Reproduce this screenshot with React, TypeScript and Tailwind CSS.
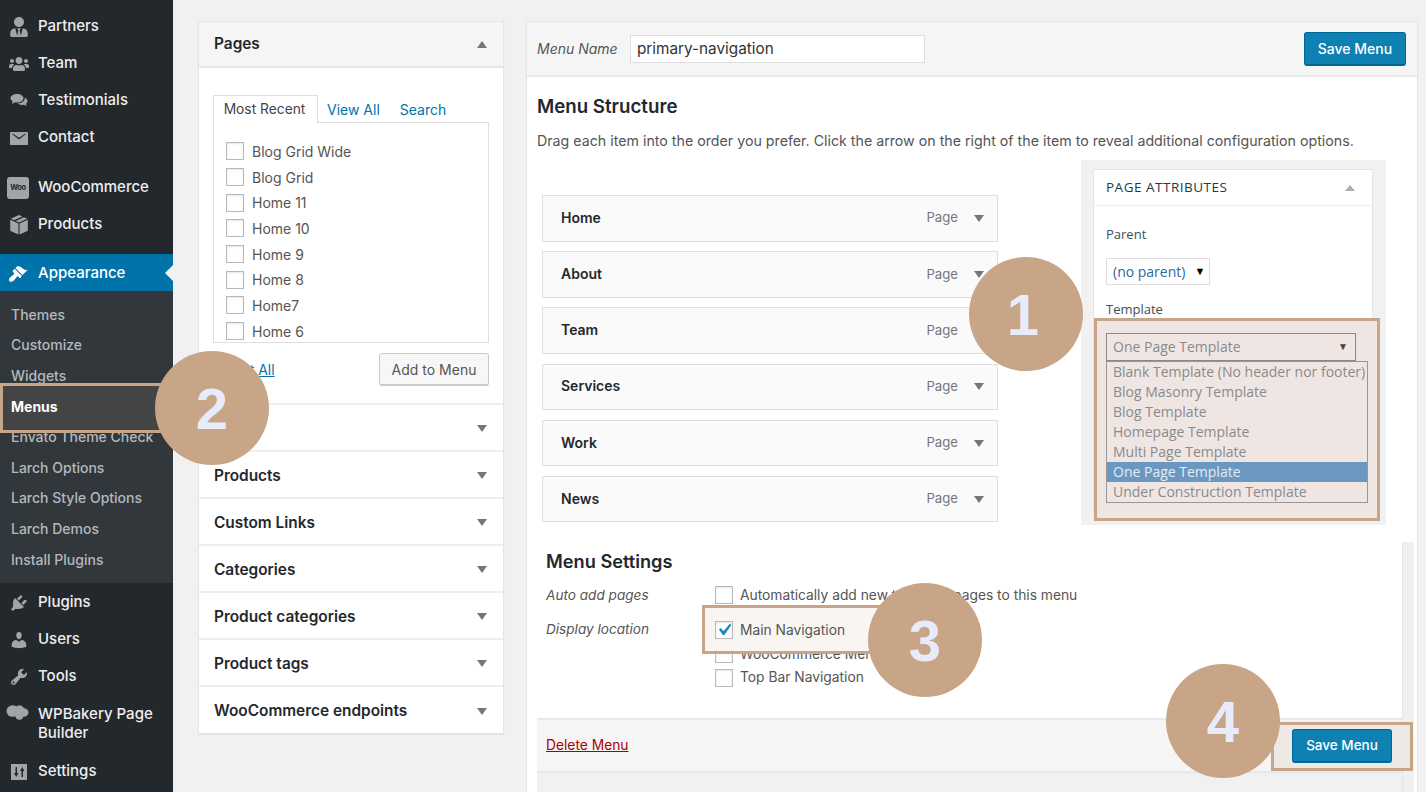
import { FaUserTie, FaUsers } from "react-icons/fa"

const iconClass = "w-5 h-5 fill-current"

const Dash = ({ d }: { d: string }) => (
  <svg viewBox="0 0 20 20" className={iconClass}>
    <path d={d} />
  </svg>
)

const Chat = () => (
  <svg viewBox="0 0 20 20" className={iconClass}>
    <path d="M8 3c3.6 0 6.5 1.900 6.500 4.300S11.600 11.500 8 11.500c-.7 0-1.300-.1-1.900-.2L3 13l.6-2.900C2.300 9.300 1.500 8.400 1.500 7.300 1.500 4.900 4.400 3 8 3z" />
    <path d="M15.800 6.800c1.600.7 2.700 1.900 2.700 3.300 0 1-.6 2-1.500 2.700l.4 2.200-2.500-1.300c-.6.100-1.200.2-1.800.2-1.900 0-3.500-.6-4.500-1.600 3.800.1 6.900-1.900 7.200-4.900z" />
  </svg>
)

const Mail = () => (
  <svg viewBox="0 0 20 20" className={iconClass}>
    <path d="M2 4h16c.6 0 1 .4 1 1v11c0 .6-.4 1-1 1H2c-.6 0-1-.4-1-1V5c0-.6.4-1 1-1zm1 2l7 5.500L17 6l-1-.2-6 4-6-4z" fillRule="evenodd" />
  </svg>
)

const Woo = () => (
  <div className="w-[22px] h-[22px] rounded-[3px] bg-[#a0a5aa] flex items-center justify-center text-[7.500px] font-bold tracking-tighter text-[#23282d] -ml-[2px]">
    Woo
  </div>
)

const Box = () => (
  <svg viewBox="0 0 20 20" className="w-[22px] h-[22px] fill-current -ml-[1px]">
    <path d="M10 1l3 1.300-7.500 3.300-3-1.300zM14.500 3l3 1.400L10 7.700 7 6.400zM2 5.300l7.500 3.300v10L2 15.300zM18 5.300v10l-7.500 3.300v-10z" />
  </svg>
)

const Cloud = () => (
  <svg viewBox="0 0 24 20" className="w-[23px] h-5 fill-current -ml-[3px]">
    <ellipse cx="7" cy="8" rx="6.500" ry="6" />
    <ellipse cx="14" cy="7.500" rx="5.500" ry="5.500" />
    <ellipse cx="18.500" cy="9.500" rx="5" ry="4.500" />
    <ellipse cx="14" cy="13.500" rx="4" ry="3.500" />
  </svg>
)

const Sliders = () => (
  <svg viewBox="0 0 20 20" className={iconClass}>
    <path
      fillRule="evenodd"
      d="M2 2h16v16H2zM6.500 5v6H5l2.200 4 2.300-4H8V5zM13.200 5L11 9h1.500v6H14V9h1.500z"
    />
  </svg>
)

const topItems = [
  { label: "Partners", icon: <FaUserTie className="w-5 h-5" /> },
  { label: "Team", icon: <FaUsers className="w-5 h-5" /> },
  { label: "Testimonials", icon: <Chat /> },
  { label: "Contact", icon: <Mail /> },
]

const shopItems = [
  { label: "WooCommerce", icon: <Woo /> },
  { label: "Products", icon: <Box /> },
]

const subItems = [
  "Themes",
  "Customize",
  "Widgets",
  "Menus",
  "Envato Theme Check",
  "Larch Options",
  "Larch Style Options",
  "Larch Demos",
  "Install Plugins",
]

const lowerItems = [
  {
    label: "Plugins",
    icon: (
      <Dash d="M13.110 4.360L9.870 7.600 8 5.730l3.240-3.240c.35-.34 1.050-.2 1.560.32.52.51.66 1.210.31 1.550zm-8 1.770l.91-1.120 9.010 9.010-1.190.84c-.71.71-2.630 1.160-3.820 1.160H6.140L4.900 17.260c-.59.59-1.540.59-2.120 0-.59-.58-.59-1.530 0-2.120l1.240-1.240v-3.880c0-1.130.4-3.190 1.090-3.890zm7.260 3.970l3.240-3.240c.34-.35 1.040-.21 1.550.31.52.51.66 1.210.31 1.550l-3.240 3.250z" />
    ),
  },
  {
    label: "Users",
    icon: (
      <Dash d="M10 9.250c-2.270 0-2.730-3.440-2.730-3.440C7 4.020 7.820 2 9.970 2c2.160 0 2.980 2.020 2.710 3.810 0 0-.41 3.440-2.680 3.440zm0 2.570L12.720 10c2.390 0 4.520 2.330 4.520 4.530v2.490s-3.650 1.130-7.240 1.130c-3.650 0-7.240-1.130-7.240-1.130v-2.490c0-2.250 1.940-4.480 4.470-4.480z" />
    ),
  },
  {
    label: "Tools",
    icon: (
      <Dash d="M16.680 9.770c-1.340 1.340-3.300 1.670-4.950.99l-5.410 6.520c-.99.99-2.590.99-3.580 0s-.99-2.590 0-3.570l6.520-5.420c-.68-1.650-.35-3.610.99-4.950 1.280-1.280 3.120-1.620 4.720-1.060l-2.890 2.890 2.820 2.820 2.860-2.870c.53 1.580.18 3.390-1.080 4.650zM3.810 16.210c.4.39 1.040.39 1.430 0 .4-.4.4-1.040 0-1.430-.39-.4-1.030-.4-1.430 0-.39.39-.39 1.030 0 1.430z" />
    ),
  },
]

const pagesList = [
  "Blog Grid Wide",
  "Blog Grid",
  "Home 11",
  "Home 10",
  "Home 9",
  "Home 8",
  "Home7",
  "Home 6",
]

const accordions = [
  "Posts",
  "Products",
  "Custom Links",
  "Categories",
  "Product categories",
  "Product tags",
  "WooCommerce endpoints",
]

const menuItems = ["Home", "About", "Team", "Services", "Work", "News"]

const templates = [
  "Blank Template (No header nor footer)",
  "Blog Masonry Template",
  "Blog Template",
  "Homepage Template",
  "Multi Page Template",
  "One Page Template",
  "Under Construction Template",
]

function SideRow({ label, icon }: { label: string; icon: React.ReactNode }) {
  return (
    <div className="h-[37px] pt-[2px] flex items-center text-[#eeeeee] font-medium text-[15px]">
      <div className="w-[38px] pl-[9px] shrink-0 text-[#a0a5aa]">{icon}</div>
      {label}
    </div>
  )
}

function Sidebar() {
  return (
    <aside className="w-[173px] h-[792px] shrink-0 bg-[#23282d] pt-[7px] overflow-hidden">
      {topItems.map((it) => (
        <SideRow key={it.label} {...it} />
      ))}
      <div className="h-[13px]" />
      {shopItems.map((it) => (
        <SideRow key={it.label} {...it} />
      ))}
      <div className="h-3" />
      <div className="relative h-[37px] pt-[2px] flex items-center bg-[#0073aa] text-white font-medium text-[15px]">
        <div className="w-[38px] pl-[8px] shrink-0">
          <Dash d="M14.480 11.060L7.410 3.990l1.500-1.500c.5-.56 2.300-.47 3.510.32 1.210.8 1.430 1.280 2.910 2.100 1.180.64 2.450 1.260 4.450.85zm-.71.71L6.700 4.700 4.930 6.470c-.39.39-.39 1.020 0 1.410l1.060 1.060c.39.39.39 1.030 0 1.420-.6.6-1.430 1.110-2.210 1.690-.35.26-.7.53-1.010.84C1.430 13.230 1 15 1 15.900c0 .9.43 1.380.43 1.380.2.21.65.5 1.380.5.79 0 2.310-.59 3.610-1.900.31-.31.58-.66.84-1.010.58-.78 1.090-1.610 1.690-2.210.39-.39 1.020-.39 1.410 0l1.060 1.060c.39.39 1.020.39 1.410 0z" />
        </div>
        Appearance
        <div className="absolute right-0 top-[11px] w-0 h-0 border-y-[8px] border-y-transparent border-r-[8px] border-r-[#f1f1f1]" />
      </div>
      <div className="bg-[#32373c] pt-2 pl-[11px] h-[292px]">
        {subItems.map((s) => (
          <div key={s} className="h-[30.600px] flex items-center text-[14px] font-medium text-[#b4b9be]">
            {s === "Menus" ? "" : s}
          </div>
        ))}
      </div>
      {lowerItems.map((it) => (
        <SideRow key={it.label} {...it} />
      ))}
      <div className="h-[58px] flex items-center text-[#eeeeee] font-medium text-[15px] leading-[19px]">
        <div className="w-[38px] pl-[9px] shrink-0 text-[#a0a5aa] self-start pt-[9px]">
          <Cloud />
        </div>
        <span>
          WPBakery Page
          <br />
          Builder
        </span>
      </div>
      <SideRow label="Settings" icon={<Sliders />} />
    </aside>
  )
}

function Arrow({ up }: { up?: boolean }) {
  return (
    <div
      className={`w-0 h-0 border-x-[5px] border-x-transparent ${up ? "border-b-[7px] border-b-[#72777c]" : "border-t-[7px] border-t-[#72777c]"}`}
    />
  )
}

function Check({ checked }: { checked?: boolean }) {
  return (
    <div className="w-[18px] h-[18px] shrink-0 border border-[#b4b9be] bg-white shadow-[inset_0_1px_2px_rgba(0,0,0,0.1)] flex items-center justify-center">
      {checked && (
        <svg viewBox="0 0 20 20" className="w-6 h-6 shrink-0 fill-[#1e8cbe]">
          <path d="M14.830 4.890l1.340.94-5.810 8.380H9.020L5.780 9.670l1.340-1.250 2.570 2.400z" />
        </svg>
      )}
    </div>
  )
}

function PagesPanel() {
  return (
    <div className="w-[306px] shrink-0 mt-[21px] h-[713px] bg-white border border-[#e5e5e5] shadow-[0_1px_1px_rgba(0,0,0,0.04)]">
      <div className="h-[46px] flex items-center justify-between px-[15px] bg-[#f5f5f5] border-b-2 border-[#e8e8e8] text-[15.400px] font-semibold text-[#23282d]">
        Pages
        <div className="mr-[1px]">
          <Arrow up />
        </div>
      </div>
      <div className="h-[337px] px-[14px] pt-[27px] border-b-2 border-[#eeeeee]">
        <div className="flex text-[14px] h-[28px] relative z-10">
          <div className="w-[105px] h-[28px] border border-b-0 border-[#dfdfdf] bg-white flex items-center justify-center pr-[2px] text-[13.800px] text-[#444]">
            Most Recent
          </div>
          <div className="ml-[9px] flex items-center text-[#0073aa]">View All</div>
          <div className="ml-[20px] flex items-center text-[#0073aa]">Search</div>
        </div>
        <div className="h-[221px] -mt-[1px] border border-[#dfdfdf] overflow-hidden pl-[12px] pt-[15.500px]">
          {pagesList.map((p) => (
            <div key={p} className="h-[25.700px] flex items-center text-[14px] text-[#555] gap-[8px]">
              <Check />
              {p}
            </div>
          ))}
        </div>
        <div className="flex items-center justify-between mt-[10px]">
          <span className="-mt-[1px] text-[14px] text-[#0073aa] underline">Select All</span>
          <div className="w-[110px] h-[33px] flex items-center justify-center rounded-[3px] border border-[#cccccc] border-b-2 bg-[#f7f7f7] text-[14px] text-[#555]">
            Add to Menu
          </div>
        </div>
      </div>
      {accordions.map((a) => (
        <div
          key={a}
          className="h-[47px] last:h-[46px] pt-[2px] flex items-center justify-between px-[15px] border-b-2 border-[#eeeeee] last:border-b-0 text-[15.400px] font-semibold text-[#23282d]"
        >
          {a}
          <div className="mr-[1px]">
            <Arrow />
          </div>
        </div>
      ))}
    </div>
  )
}

function SaveButton({ className }: { className: string }) {
  return (
    <div
      className={`flex items-center justify-center rounded-[3px] bg-[#0f80b2] border border-[#006799] border-b-2 text-white font-medium ${className}`}
    >
      Save Menu
    </div>
  )
}

function MainPanel() {
  return (
    <div className="w-[892px] shrink-0 mt-[21px] ml-[22px] h-[771px] bg-white border-l border-t border-r border-[#e5e5e5] overflow-hidden flex flex-col">
      <div className="h-[55px] shrink-0 flex items-center bg-[#f5f5f5] border-b-2 border-[#e8e8e8] pl-[10px] pr-[11px]">
        <span className="italic text-[14px] text-[#555] w-[93px]">Menu Name</span>
        <div className="w-[295px] h-[28px] border border-[#dddddd] bg-white flex items-center pl-[6px] pt-[1px] text-[15.300px] text-[#333]">
          primary-navigation
        </div>
        <SaveButton className="ml-auto w-[102px] h-[34px] text-[14px]" />
      </div>
      <div className="h-[465px] shrink-0 pl-[10px] pt-[19px]">
        <h3 className="text-[18.700px] leading-[22px] font-semibold text-[#23282d]">Menu Structure</h3>
        <p className="mt-[13px] text-[14.230px] leading-[20px] text-[#555]">
          Drag each item into the order you prefer. Click the arrow on the right of the item to reveal additional configuration options.
        </p>
        <div className="mt-[44px] ml-[5px] w-[456px] flex flex-col">
          {menuItems.map((m, i) => (
            <div
              key={m}
              className={`h-[46.500px] flex items-center border border-[#dfdfdf] bg-[#fafafa] pl-[18px] pr-[13px] ${i === 0 ? "" : "mt-[9.700px]"}`}
            >
              <span className="pb-[2px] text-[14px] font-semibold text-[#23282d]">{m}</span>
              <span className="ml-auto text-[13.200px] text-[#72777c]">Page</span>
              <div className="ml-[16px]">
                <Arrow />
              </div>
            </div>
          ))}
        </div>
      </div>
      <div className="flex-1 flex ml-[10px]">
        <div className="w-[865px] flex flex-col">
          <div className="h-[176px] bg-white pl-[9px] pt-[7px]">
            <h3 className="text-[18.200px] leading-[24px] font-semibold text-[#23282d]">Menu Settings</h3>
            <div className="mt-[10px] flex">
              <span className="w-[169px] italic text-[13.600px] text-[#555] leading-[24px]">Auto add pages</span>
              <div className="flex items-center gap-[7px] text-[13.800px] text-[#555] h-[24px]">
                <Check />
                Automatically add new top-level pages to this menu
              </div>
            </div>
            <div className="mt-[10px] flex">
              <span className="w-[169px] italic text-[13.600px] text-[#555] leading-[24px]">Display location</span>
              <div className="flex flex-col mt-[2px] text-[13.800px] text-[#555]">
                {["Main Navigation", "WooCommerce Menu", "Top Bar Navigation"].map((l, i) => (
                  <div key={l} className="h-[23.500px] flex items-center gap-[7px]">
                    <Check checked={i === 0} />
                    {l}
                  </div>
                ))}
              </div>
            </div>
          </div>
          <div className="h-[55px] flex items-center justify-between bg-[#f5f5f5] border-t-2 border-b-2 border-[#e8e8e8] pl-[9px] pr-[10px]">
            <span className="text-[13.800px] text-[#a00] underline">Delete Menu</span>
            <SaveButton className="w-[100px] h-[34px] text-[13.500px]" />
          </div>
          <div className="flex-1 bg-[#f1f1f1]" />
        </div>
        <div className="w-[12px] bg-[#f0f0f0] border-l border-[#e5e5e5]" />
      </div>
    </div>
  )
}

function PageAttributes() {
  return (
    <div className="absolute left-[1081px] top-[160px] w-[305px] h-[365px] bg-[#f1f1f1] pl-[12px] pt-[9px] font-['Open_Sans',sans-serif]">
      <div className="w-[280px] h-[346px] bg-white border border-[#e5e5e5]">
        <div className="h-[36px] flex items-center justify-between pl-[12px] pr-[17px] border-b border-[#eeeeee] text-[13.500px] tracking-[0.5px] text-[#1f3a4d]">
          PAGE ATTRIBUTES
          <div className="w-0 h-0 border-x-[5px] border-x-transparent border-b-[6px] border-b-[#a8b0b6]" />
        </div>
        <div className="pl-[12px]">
          <div className="mt-[18px] text-[13px] leading-[20px] text-[#3d4f5c]">Parent</div>
          <div className="mt-[14px] w-[104px] h-[27px] border border-[#dddddd] flex items-center pl-[6px] text-[14px] text-[#2d6a9f]">
            (no parent)
            <span className="ml-[9px] text-[11px] text-black">▼</span>
          </div>
          <div className="mt-[14px] text-[13px] leading-[20px] text-[#3d4f5c]">Template</div>
        </div>
      </div>
    </div>
  )
}

function TemplateDropdown() {
  return (
    <div className="absolute left-[1094px] top-[318px] w-[286px] h-[203px] border-[3px] border-[#c7a586] bg-[#efe6e4] pl-[9px] pt-[12px] font-['Open_Sans',sans-serif] text-[14px] text-[#8a8a8a]">
      <div className="w-[250px] h-[28px] border border-[#8c8886] flex items-center justify-between pl-[6px] pr-[7px] pb-[2px] shadow-[0_1px_1px_rgba(0,0,0,0.1)]">
        One Page Template
        <span className="text-[10px] text-[#444]">▼</span>
      </div>
      <div className="w-[262px] h-[142px] border border-[#9a9694] whitespace-nowrap">
        {templates.map((t) => (
          <div
            key={t}
            className={`h-[20px] leading-[20px] pl-[6px] ${t === "One Page Template" ? "bg-[#6b98c0] text-[#e6ecf2]" : ""}`}
          >
            {t}
          </div>
        ))}
      </div>
    </div>
  )
}

function Badge({ n, className }: { n: number; className: string }) {
  return (
    <div
      className={`absolute w-[114px] h-[114px] rounded-full bg-[#c7a586] flex items-center justify-center text-[#e8ecfa] text-[58px] font-bold font-['Liberation_Sans',sans-serif] ${className}`}
    >
      {n}
    </div>
  )
}

export default function App() {
  return (
    <div className="relative w-[1426px] h-[792px] overflow-hidden bg-[#f1f1f1] flex font-['Inter',sans-serif]">
      <Sidebar />
      <div className="ml-[25px] flex items-start">
        <PagesPanel />
        <MainPanel />
      </div>

      <PageAttributes />
      <TemplateDropdown />

      {/* step highlights */}
      <div className="absolute left-0 top-[383px] w-[170px] h-[50px] border-[3px] border-[#c7a586] bg-[#444444] flex items-center pl-[8px] pb-[3px] text-[14px] font-bold text-white">
        Menus
      </div>
      <div className="absolute left-[702px] top-[605px] w-[180px] h-[49px] border-[3px] border-[#c7a586] bg-[#f8f5f2] flex items-center pl-[10px] pt-[1px] gap-[7px] text-[13.800px] text-[#555]">
        <Check checked />
        Main Navigation
      </div>
      <div className="absolute left-[1271px] top-[722px] w-[142px] h-[49px] border-[3px] border-[#c7a586] bg-[#eee9e5] flex items-center pl-[18px] pb-[2px]">
        <SaveButton className="w-[100px] h-[34px] text-[13.500px]" />
      </div>

      <Badge n={1} className="left-[969px] top-[257px] pr-[6px]" />
      <Badge n={2} className="left-[155px] top-[351px]" />
      <Badge n={3} className="left-[868px] top-[583px]" />
      <Badge n={4} className="left-[1166px] top-[664px]" />
    </div>
  )
}
